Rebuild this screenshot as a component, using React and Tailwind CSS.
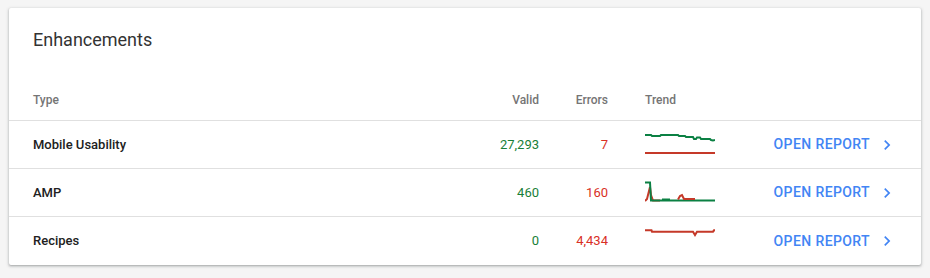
import React from "react";

const GREEN = "#0b8043";
const RED = "#c53929";

const rows = [
  {
    type: "Mobile Usability",
    valid: "27,293",
    errors: "7",
    lines: [
      {
        color: GREEN,
        points:
          "0,2 6,2 7,3 15,3 16,2 33,2 34,3 40,3 41,4 48,4 49,6 51,6 52,4.5 55,4.5 56,6 65,6 66,7 68,7.5 70,7",
      },
      { color: RED, points: "0,20 70,20" },
    ],
  },
  {
    type: "AMP",
    valid: "460",
    errors: "160",
    lines: [
      { color: RED, points: "0,20 2,18 5,6 6,14 8,19.5 15,19.5" },
      { color: GREEN, points: "0,1.5 5,1.5 6,19.5 70,19.5" },
      { color: GREEN, points: "17,18.5 25,18.5" },
      { color: RED, points: "33,18.5 35,15 37,14 39,18 50,18" },
    ],
  },
  {
    type: "Recipes",
    valid: "0",
    errors: "4,434",
    lines: [
      {
        color: RED,
        points: "0,1.3 6.5,1.3 7,2.7 48,2.7 50,6 52,2.7 68,2.7 69,1.3 70,1.3",
      },
    ],
  },
];

function Sparkline({ lines }) {
  return (
    <svg width="70" height="24" viewBox="0 0 70 24" fill="none">
      {lines.map((l, i) => (
        <polyline
          key={i}
          points={l.points}
          stroke={l.color}
          strokeWidth="2"
          strokeLinejoin="miter"
        />
      ))}
    </svg>
  );
}

function Chevron() {
  return (
    <svg width="20" height="20" viewBox="0 0 24 24" fill="#4285f4">
      <path d="M10 6 8.59 7.41 13.17 12l-4.58 4.59L10 18l6-6z" />
    </svg>
  );
}

export default function App() {
  return (
    <div className="min-h-[278px] bg-[#f5f5f5] pt-2 pl-[9px] font-['Roboto',sans-serif]">
      <div className="w-[912px] rounded-[2px] bg-white shadow-[0_1px_2px_0_rgba(60,64,67,0.3),0_1px_3px_1px_rgba(60,64,67,0.15)]">
        <div className="h-[72px] px-6 pt-[18px] text-[18px] leading-[28px] text-[#333333]">
          Enhancements
        </div>

        <div className="flex h-[41px] items-center border-b border-[#e0e0e0] px-6 text-[12px] font-medium text-[#757575]">
          <div className="flex-1">Type</div>
          <div className="w-[100px] text-right">Valid</div>
          <div className="w-[69px] text-right">Errors</div>
          <div className="w-[107px] pl-[37px]">Trend</div>
          <div className="w-[182px]" />
        </div>

        {rows.map((r, i) => (
          <div
            key={r.type}
            className={`flex h-12 items-center px-6 text-[13px] ${
              i < rows.length - 1 ? "border-b border-[#e0e0e0]" : ""
            }`}
          >
            <div className="flex-1 font-medium text-[#212121]">{r.type}</div>
            <div className="w-[100px] text-right text-[#188038]">{r.valid}</div>
            <div className="w-[69px] text-right text-[#d93025]">{r.errors}</div>
            <div className="flex w-[107px] items-center pl-[37px]">
              <Sparkline lines={r.lines} />
            </div>
            <div className="flex w-[182px] items-center justify-end gap-[7px]">
              <span className="text-[14px] font-medium tracking-[0.4px] text-[#4285f4]">
                OPEN REPORT
              </span>
              <Chevron />
            </div>
          </div>
        ))}
      </div>
    </div>
  );
}
